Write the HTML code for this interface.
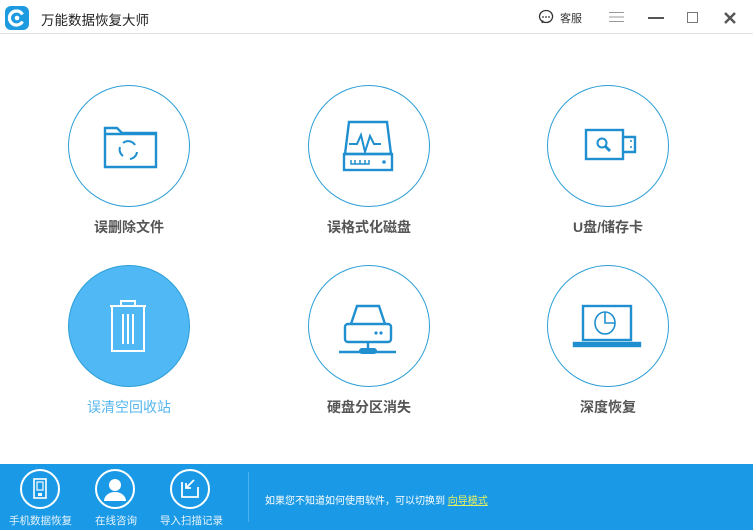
<!DOCTYPE html>
<html><head><meta charset="utf-8"><style>
*{margin:0;padding:0;box-sizing:border-box}
body{width:753px;height:530px;overflow:hidden;background:#fff;font-family:"Liberation Sans","Noto Sans CJK SC",sans-serif;position:relative}
.top{position:absolute;left:0;top:0;width:753px;height:34px;border-bottom:1px solid #e3e3e3;background:#fff}
.t{position:absolute;left:41px;top:9px;font-size:13.5px;color:#222}
.c{position:absolute;width:122px;height:122px;border:1.8px solid #2e9fd6;border-radius:50%}
.c svg{position:absolute;left:0;top:0}
.l{position:absolute;width:200px;text-align:center;font-size:14px;font-weight:bold;color:#555}
.foot{position:absolute;left:0;top:464px;width:753px;height:66px;background:#1a9ae6}
.fi{position:absolute;top:5px;width:40px;height:40px;border:2px solid #fff;border-radius:50%}
.fl{position:absolute;top:49px;font-size:10.5px;color:#e6f3fc}
</style></head><body>
<div class="top">
<svg style="position:absolute;left:5px;top:6px" width="24" height="24"><rect width="24" height="24" rx="6" fill="#1d9ae0"/><path d="M17.5 8.5A7 7 0 1 0 17.5 15.5" fill="none" stroke="#fff" stroke-width="3.2"/><circle cx="12" cy="12" r="2.3" fill="#fff"/></svg>
<div class="t">万能数据恢复大师</div>
<svg style="position:absolute;left:538px;top:9px" width="16" height="16"><path d="M8 1.5a6.5 6 0 1 0 0.1 0zM4 14l1-2.5" fill="none" stroke="#333" stroke-width="1.3"/><circle cx="5" cy="8" r=".9" fill="#333"/><circle cx="8" cy="8" r=".9" fill="#333"/><circle cx="11" cy="8" r=".9" fill="#333"/></svg>
<div style="position:absolute;left:560px;top:10px;font-size:11px;color:#333">客服</div>
<svg style="position:absolute;left:609px;top:11px" width="16" height="12"><path d="M0 1.5h15M0 6h15M0 10.5h15" stroke="#999" stroke-width="1"/></svg>
<div style="position:absolute;left:648px;top:17px;width:16px;height:2px;background:#555"></div>
<div style="position:absolute;left:687px;top:12px;width:11px;height:11px;border:1px solid #777"></div>
<svg style="position:absolute;left:723px;top:11px" width="14" height="14"><path d="M2 2l10 10M12 2L2 12" stroke="#555" stroke-width="2.4"/></svg>
</div>

<div class="c" style="left:68px;top:85px"><svg width="118" height="118"><g fill="none" stroke="#1f8fcf" stroke-width="2.4"><path d="M36 63V42h12l5 5h34v34H36z"/><path d="M36 48h51"/><path d="M54 57a8 8 0 0 1 12 2M68 66a8 8 0 0 1-7 7M54 70a8 8 0 0 1-3-9" stroke-width="2"/></g></svg></div>
<div class="l" style="left:29px;top:217px">误删除文件</div>

<div class="c" style="left:308px;top:85px"><svg width="118" height="118"><g fill="none" stroke="#1f8fcf" stroke-width="2.4"><path d="M40 36h38l4 32H36z"/><rect x="35" y="68" width="48" height="16"/><path d="M40 58h8l4-9 4 17 5-16 4 8h7" stroke-width="2"/><path d="M42 74v4h18v-4M46 74v4M51 74v4M56 74v4" stroke-width="1.5"/></g><circle cx="75" cy="76" r="1.8" fill="#1f8fcf"/></svg></div>
<div class="l" style="left:269px;top:217px">误格式化磁盘</div>

<div class="c" style="left:547px;top:85px"><svg width="118" height="118"><g fill="none" stroke="#1f8fcf" stroke-width="2.4"><rect x="38" y="44" width="37" height="29"/><path d="M75 51h12v15H75"/><circle cx="54" cy="57" r="4.5" stroke-width="2"/><path d="M57 60l5 5" stroke-width="3"/></g><circle cx="83" cy="55" r="1" fill="#1f8fcf"/><circle cx="83" cy="61" r="1" fill="#1f8fcf"/></svg></div>
<div class="l" style="left:508px;top:217px">U盘/储存卡</div>

<div class="c" style="left:68px;top:265px;background:#4fb8f5;border-color:#2e9fd6"><svg width="118" height="118"><g fill="none" stroke="#fff" stroke-width="2"><path d="M41 40h36M52 40v-5h14v5"/><path d="M43 40v45h32V40"/><path d="M54 48v30M59 48v30M64 48v30"/></g></svg></div>
<div class="l" style="left:29px;top:397px;color:#56b6ee;font-weight:normal">误清空回收站</div>

<div class="c" style="left:308px;top:265px"><svg width="118" height="118"><g fill="none" stroke="#1f8fcf" stroke-width="2.4"><path d="M42 58l6-18h22l6 18"/><rect x="36" y="58" width="46" height="18" rx="3"/><path d="M59 76v6M30 86h57"/></g><rect x="50" y="82" width="18" height="6" rx="3" fill="#1f8fcf"/><circle cx="67" cy="67" r="1.6" fill="#1f8fcf"/><circle cx="72" cy="67" r="1.6" fill="#1f8fcf"/></svg></div>
<div class="l" style="left:269px;top:397px">硬盘分区消失</div>

<div class="c" style="left:547px;top:265px"><svg width="118" height="118"><g fill="none" stroke="#1f8fcf" stroke-width="2.4"><rect x="35" y="40" width="48" height="34"/><rect x="26" y="77" width="66" height="3" fill="#1f8fcf"/><ellipse cx="57" cy="57" rx="10" ry="11" stroke-width="1.6"/><path d="M57 46v11h10" stroke-width="1.6"/></g></svg></div>
<div class="l" style="left:508px;top:397px">深度恢复</div>

<div class="foot">
<div class="fi" style="left:20px"><svg width="36" height="36"><rect x="12" y="8" width="12" height="19" fill="none" stroke="#fff" stroke-width="1.6"/><rect x="15" y="11" width="6" height="8" fill="none" stroke="#fff" stroke-width="1.2"/><rect x="16" y="22" width="4" height="3" fill="#fff"/></svg></div>
<div class="fl" style="left:9px">手机数据恢复</div>
<div class="fi" style="left:95px"><svg width="36" height="36"><circle cx="18" cy="14" r="6" fill="#fff"/><path d="M7 30a11 9 0 0 1 22 0z" fill="#fff"/></svg></div>
<div class="fl" style="left:95px">在线咨询</div>
<div class="fi" style="left:170px"><svg width="36" height="36"><path d="M10 11v15h16V16" fill="none" stroke="#fff" stroke-width="1.8"/><path d="M22 9l-8 8M14 12v5h5" fill="none" stroke="#fff" stroke-width="1.8"/></svg></div>
<div class="fl" style="left:160px">导入扫描记录</div>
<div style="position:absolute;left:248px;top:8px;width:1px;height:50px;background:#4bb1ee"></div>
<div style="position:absolute;left:265px;top:28px;font-size:10px;color:#fff">如果您不知道如何使用软件，可以切换到 <span style="color:#e8f060;text-decoration:underline">向导模式</span></div>
</div>
</body></html>
